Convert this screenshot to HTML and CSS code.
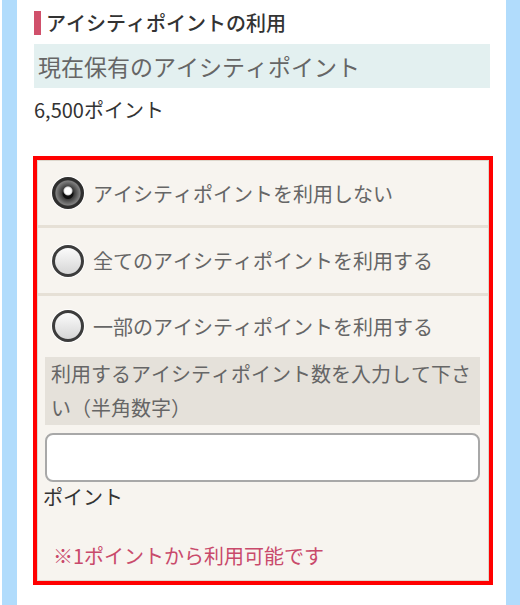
FILE: index.html
```html
<!DOCTYPE html>
<html lang="ja">
<head>
<meta charset="utf-8">
<title>アイシティポイントの利用</title>
<link rel="stylesheet" href="styles.css">
</head>
<body>
<div class="page">
  <div class="side side-left"></div>
  <main class="content">
    <h2 class="title"><span class="title-bar"></span><span class="title-text">アイシティポイントの利用</span></h2>
    <div class="held-label">現在保有のアイシティポイント</div>
    <div class="held-value">6,500ポイント</div>
    <div class="box">
      <div class="box-inner">
        <label class="opt opt-sep">
          <input class="radio" type="radio" name="use" checked>
          <span class="opt-text">アイシティポイントを利用しない</span>
        </label>
        <label class="opt opt-sep">
          <input class="radio" type="radio" name="use">
          <span class="opt-text">全てのアイシティポイントを利用する</span>
        </label>
        <label class="opt opt-last">
          <input class="radio" type="radio" name="use">
          <span class="opt-text">一部のアイシティポイントを利用する</span>
        </label>
        <div class="partial">
          <div class="hint">利用するアイシティポイント数を入力して下さい（半角数字）</div>
          <input class="points-input" type="text">
          <div class="unit">ポイント</div>
          <div class="note">※1ポイントから利用可能です</div>
        </div>
      </div>
    </div>
  </main>
  <div class="side side-right"></div>
</div>
</body>
</html>
```

FILE: styles.css
```css
* { box-sizing: border-box; }
html, body { margin: 0; padding: 0; background: #fff; }
body {
  font-family: "Noto Sans CJK JP", "Noto Sans", sans-serif;
  font-kerning: none;
  font-feature-settings: "kern" 0;
  color: #333;
}
.page {
  display: flex;
  min-height: 605px;
  padding-left: 2px;
}
.side { background: #b1dcfc; }
.side-left { width: 15px; }
.side-right { width: 14px; }
.content {
  flex: 1;
  padding: 11px 16px 0 17px;
}
.title {
  display: flex;
  align-items: center;
  gap: 5px;
  margin: 0;
  font-size: 20px;
  line-height: 24px;
  font-weight: 500;
  color: #333;
}
.title-bar {
  width: 7px;
  height: 24px;
  background: #d0506b;
}
.held-label {
  margin-top: 9px;
  height: 44px;
  padding-left: 4px;
  background: #e3f0f0;
  color: #666;
  font-size: 23px;
  line-height: 44px;
}
.held-value {
  margin-top: 7px;
  font-size: 20px;
  line-height: 30px;
  color: #333;
}
.box {
  margin: 31px -3px 0 -1px;
  border: 4px solid #ff0000;
}
.box-inner {
  border: 1px solid #ddd7cd;
  background: #f7f4ef;
}
.opt {
  display: flex;
  align-items: center;
  gap: 9px;
  padding-left: 14px;
  font-size: 20px;
  color: #666;
}
.opt-sep { border-bottom: 3px solid #e6e0d6; }
.opt:nth-child(1) { height: 67px; }
.opt:nth-child(2) { height: 68px; }
.opt-last { height: 60px; }
.radio {
  appearance: none;
  -webkit-appearance: none;
  margin: 0;
  width: 32px;
  height: 32px;
  border-radius: 50%;
  border: 3px solid #3c3c3c;
  background: linear-gradient(#fbfbfb, #d6d6d6);
  box-shadow: 0 0 0 1px rgba(255,255,255,0.9);
  flex: none;
}
.radio:checked {
  border-color: #2e2e2e;
  background:
    radial-gradient(circle at 50% 42%, #ffffff 0 3px, #d8d8d8 4px, transparent 5px),
    radial-gradient(circle at 50% 52%, #111 0 5px, transparent 6px),
    radial-gradient(circle at 50% 50%, #3a3a3a 0 6px, #6a6a6a 10px, #808080 12px, #4a4a4a 13px);
}
.partial {
  padding: 1px 8px 9px 7px;
}
.hint {
  background: #e5e1da;
  padding: 0 6px;
  font-size: 20px;
  line-height: 34px;
  color: #666;
}
.points-input {
  display: block;
  width: 100%;
  height: 49px;
  margin-top: 8px;
  border: 2px solid #a8a8a8;
  border-radius: 8px;
  background: #fff;
  font-size: 20px;
  padding: 0 8px;
}
.unit {
  margin-left: -2px;
  font-size: 20px;
  line-height: 30px;
  color: #333;
}
.note {
  margin-top: 29px;
  padding-left: 8px;
  font-size: 20px;
  line-height: 30px;
  color: #c94a6b;
}
```
